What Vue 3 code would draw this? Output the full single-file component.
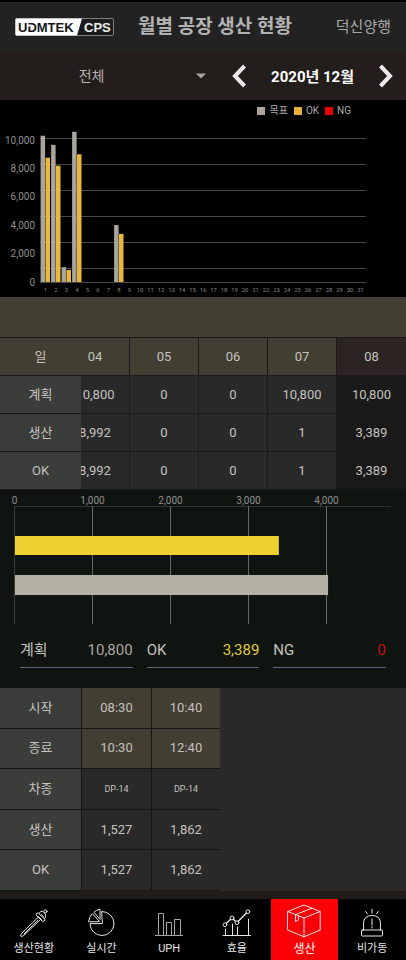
<script setup>
import { onMounted, ref } from 'vue'

const line = ref('all')

/* Monthly chart */
const days = Array.from({ length: 31 }, (_, i) => i + 1)
const monthly = [
  { day: 1, target: 10300, ok: 8750 },
  { day: 2, target: 9660, ok: 8190 },
  { day: 3, target: 1040, ok: 850 },
  { day: 4, target: 10580, ok: 8992 },
  { day: 8, target: 4014, ok: 3389 },
]
const ticks = [0, 2000, 4000, 6000, 8000, 10000]
const gridLines = [16, 42, 68, 94, 120, 146, 160]
const BASE = 160
const SCALE = 0.0142
const STEP = 10.5
const LEFT = 40
const slot = (day) => LEFT + (day - 1) * STEP
const fmt = (n) => n.toLocaleString('en-US')

/* Daily table */
const dates = ['04', '05', '06', '07', '08']
const selected = '08'
const daily = [
  { label: '계획', values: ['10,800', '0', '0', '10,800', '10,800'] },
  { label: '생산', values: ['8,992', '0', '0', '1', '3,389'] },
  { label: 'OK', values: ['8,992', '0', '0', '1', '3,389'] },
]
const scroller = ref(null)
onMounted(() => {
  scroller.value.scrollLeft = scroller.value.scrollWidth
})

/* Selected day chart */
const hTicks = [0, 1000, 2000, 3000, 4000]
const hx = (v) => 14.5 + v * 0.078

const stats = [
  { label: '계획', value: '10,800', tone: 'plan' },
  { label: 'OK', value: '3,389', tone: 'ok' },
  { label: 'NG', value: '0', tone: 'ng' },
]

const shifts = [
  { label: '시작', values: ['08:30', '10:40'], kind: 'time' },
  { label: '종료', values: ['10:30', '12:40'], kind: 'time' },
  { label: '차종', values: ['DP-14', 'DP-14'], kind: 'model' },
  { label: '생산', values: ['1,527', '1,862'], kind: 'count' },
  { label: 'OK', values: ['1,527', '1,862'], kind: 'count' },
]
</script>

<template>
  <div class="page">
    <header class="top">
      <svg class="logo" width="99" height="18" viewBox="0 0 99 18" role="img" aria-label="UDMTEK CPS">
        <rect x="0.5" y="0.5" width="98" height="17" rx="1.5" fill="#1c1c1c" stroke="#a8a8a8" stroke-width="0.7" />
        <path d="M1.5 0.5H67L62 17.5H1.5Q0.5 17.5 0.5 16.5V1.5Q0.5 0.5 1.5 0.5Z" fill="#fff" />
        <text x="3" y="14" class="logo-text dark">UDMTEK</text>
        <rect x="12" y="6.5" width="3.6" height="2" fill="#fff" />
        <text x="69" y="14" class="logo-text light">CPS</text>
      </svg>
      <h1>월별 공장 생산 현황</h1>
      <span class="company">덕신양행</span>
    </header>

    <section class="filter">
      <div class="picker">
        <select v-model="line" aria-label="라인">
          <option value="all">전체</option>
        </select>
        <svg class="caret" width="10" height="6" viewBox="0 0 10 6" aria-hidden="true"><path d="M0 0.5H10L5 5.5Z" fill="#a9a5a3" /></svg>
      </div>
      <div class="month">
        <button type="button" aria-label="이전 달">
          <svg width="14" height="24" viewBox="0 0 14 24"><path d="M12.5 2L3 12L12.5 22" /></svg>
        </button>
        <strong>2020년 12월</strong>
        <button type="button" aria-label="다음 달">
          <svg width="14" height="24" viewBox="0 0 14 24"><path d="M1.5 2L11 12L1.5 22" /></svg>
        </button>
      </div>
    </section>

    <section class="monthly">
      <ul class="legend">
        <li><i class="swatch target"></i>목표</li>
        <li><i class="swatch ok"></i>OK</li>
        <li><i class="swatch ng"></i>NG</li>
      </ul>
      <svg class="chart" viewBox="0 0 406 175">
        <line v-for="y in gridLines" :key="y" x1="40" :y1="y + 0.5" x2="366" :y2="y + 0.5" stroke="#484848" />
        <text v-for="t in ticks" :key="t" x="35" :y="BASE + 3.5 - t * SCALE" class="tick end">{{ fmt(t) }}</text>
        <g v-for="m in monthly" :key="m.day">
          <rect :x="slot(m.day) + 0.6" :y="BASE - m.target * SCALE" width="4.5" :height="m.target * SCALE" fill="#a9a59c" />
          <rect :x="slot(m.day) + 5.5" :y="BASE - m.ok * SCALE" width="4.5" :height="m.ok * SCALE" fill="#e8b83c" />
        </g>
        <text v-for="d in days" :key="d" :x="slot(d) + 5.5" y="170" class="day">{{ d }}</text>
      </svg>
    </section>

    <div class="band"></div>

    <div ref="scroller" class="scroller">
      <table class="daily">
        <thead>
          <tr>
            <th scope="col" class="stick">일</th>
            <th v-for="d in dates" :key="d" scope="col" :class="{ selected: d === selected }">{{ d }}</th>
          </tr>
        </thead>
        <tbody>
          <tr v-for="row in daily" :key="row.label">
            <th scope="row" class="stick label">{{ row.label }}</th>
            <td v-for="(v, i) in row.values" :key="i" :class="{ selected: dates[i] === selected }">{{ v }}</td>
          </tr>
        </tbody>
      </table>
    </div>

    <section class="detail">
      <svg class="chart" viewBox="0 0 406 138">
        <line x1="14" y1="16.5" x2="391" y2="16.5" stroke="#2f3330" />
        <g v-for="t in hTicks" :key="t">
          <line :x1="hx(t)" y1="16" :x2="hx(t)" y2="134" :stroke="t === 0 ? '#3a3e3b' : '#666a67'" />
          <text :x="hx(t)" y="14" class="tick mid">{{ fmt(t) }}</text>
        </g>
        <rect x="15" y="46" :width="hx(3389) - 15" height="19" fill="#efd232" />
        <rect x="15" y="85" :width="hx(4020) - 15" height="20" fill="#b5b0a4" />
      </svg>
      <dl class="stats">
        <div v-for="s in stats" :key="s.label" class="stat">
          <dt>{{ s.label }}</dt>
          <dd :class="s.tone">{{ s.value }}</dd>
        </div>
      </dl>
    </section>

    <div class="shift-area">
      <table class="shifts">
        <tbody>
          <tr v-for="row in shifts" :key="row.label">
            <th scope="row" class="label">{{ row.label }}</th>
            <td v-for="(v, i) in row.values" :key="i" :class="row.kind">{{ v }}</td>
          </tr>
        </tbody>
      </table>
    </div>

    <nav class="tabs">
      <a href="#status">
        <span class="icon">
          <svg width="30" height="30" viewBox="0 0 30 30">
            <path d="M19.5 9L2.8 25.2Q1.2 27 1.8 28.2Q3 29 4.8 27.4L21.5 11.5M5 26L19 12.2" />
            <path d="M17 6.5Q17.5 4.5 19.5 5.2L26 11.3Q26.2 13.4 24 13.4Z" />
            <path d="M20 5.4Q21 3 23.6 3.2L26.5 6.2Q26.8 9 25.6 10.8M19.5 8.6L22.8 12M22.5 6.5L24.5 8.6" />
            <circle cx="26.4" cy="3.4" r="1.6" />
          </svg>
        </span>
        생산현황
      </a>
      <a href="#realtime">
        <span class="icon">
          <svg width="30" height="30" viewBox="0 0 30 30">
            <path d="M16 3.5A12 12 0 1 1 4 15.6H16Z" />
            <path d="M2.6 13.4Q3 8.8 6.4 5.6L13.4 13.4Z" />
            <path d="M8.2 4Q10.6 1.7 14 1.3V11Z" />
          </svg>
        </span>
        실시간
      </a>
      <a href="#uph">
        <span class="icon">
          <svg class="dim" width="30" height="30" viewBox="0 0 30 30">
            <path d="M4.5 27V5.5H9.5V27M12.5 27V14.5H17.5V27M20.5 27V11.5H26.5V27M1.5 27.5H28.5" />
          </svg>
        </span>
        UPH
      </a>
      <a href="#efficiency">
        <span class="icon">
          <svg width="30" height="30" viewBox="0 0 30 30">
            <path d="M1 27.5H28.5M3.5 27V21M10.5 27V16M15.5 27V19M26.5 27V11" />
            <path d="M4.4 15.3L8.6 11.3M11.4 11.3L13.6 13.4M16.3 13.2L24.5 5" stroke-width="1.4" />
            <circle cx="3" cy="16.7" r="1.9" /><circle cx="10" cy="10" r="1.9" />
            <circle cx="15" cy="14.7" r="1.9" /><circle cx="25.8" cy="3.7" r="1.9" />
          </svg>
        </span>
        효율
      </a>
      <a href="#production" class="active" aria-current="page">
        <span class="icon">
          <svg width="34" height="34" viewBox="0 0 34 34">
            <path d="M0.8 7.5L17 1L33.2 7.5V26L17 32.8L0.8 26ZM0.8 7.5L17 14L33.2 7.5M17 14V32.8" />
            <path d="M8.5 10.6L25 4.2M8.5 10.6V17.6L11.4 16V11.8" />
          </svg>
        </span>
        생산
      </a>
      <a href="#idle">
        <span class="icon">
          <svg width="30" height="30" viewBox="0 0 30 30">
            <rect x="4.5" y="22" width="21" height="6" rx="0.8" />
            <path d="M6.5 22V16Q6.5 7.5 15 7.5Q23.5 7.5 23.5 16V22M15 11V17M15 18.6V20" />
            <path d="M15 1.2V5.2M8.6 3.4L10.6 6M21.4 3.4L19.4 6" />
          </svg>
        </span>
        비가동
      </a>
    </nav>
  </div>
</template>

<style>
body {
  background: #201c19;
}
</style>

<style scoped>
* {
  box-sizing: border-box;
}
.page {
  display: flex;
  flex-direction: column;
  min-height: 100vh;
  overflow: hidden;
  border-top: 2px solid #000;
  background: #201c19;
  color: #c4c2be;
  font-family: Roboto, "Noto Sans CJK KR", sans-serif;
}
.top {
  display: flex;
  align-items: center;
  height: 49px;
  padding: 0 15px;
  background: #222;
}
.logo {
  flex: none;
}
.logo-text {
  font: bold 13px "Liberation Sans", sans-serif;
}
.dark {
  fill: #161616;
}
.light {
  fill: #f0f0f0;
}
h1 {
  margin: 0 0 0 24px;
  font-size: 19px;
  line-height: 24px;
  font-weight: 700;
  color: #b2b2b2;
  white-space: nowrap;
}
.company {
  margin-left: auto;
  font-size: 15px;
  line-height: 20px;
  color: #a9a9a9;
  white-space: nowrap;
}
.filter {
  display: flex;
  height: 49px;
  background: #231d1b;
}
.picker {
  position: relative;
  flex: 0 0 52%;
  display: flex;
}
.picker select {
  flex: 1;
  appearance: none;
  border: 0;
  padding: 0 28px 0 0;
  background: transparent;
  color: #b4b0ae;
  font: inherit;
  font-size: 14px;
  text-align: center;
  text-align-last: center;
}
.caret {
  position: absolute;
  right: 5px;
  top: 22px;
  pointer-events: none;
}
.month {
  flex: 1;
  display: flex;
  align-items: center;
  justify-content: space-between;
  padding: 0 13px 0 21px;
}
.month strong {
  font-size: 15px;
  color: #fff;
}
.month button {
  display: flex;
  border: 0;
  padding: 0;
  background: none;
}
.month path {
  fill: none;
  stroke: #ecebea;
  stroke-width: 4;
}
.monthly {
  background: #000;
}
.legend {
  display: flex;
  justify-content: flex-end;
  gap: 6px;
  margin: 0;
  padding: 4px 55px 4px 0;
  list-style: none;
  font-size: 10px;
  line-height: 14px;
  color: #a8a8a8;
}
.legend li {
  display: flex;
  align-items: center;
  gap: 4px;
}
.swatch {
  width: 8px;
  height: 8px;
}
.swatch.target {
  background: #a9a39c;
}
.swatch.ok {
  background: #e8b23a;
}
.swatch.ng {
  background: #f00000;
}
.chart {
  display: block;
  width: 100%;
}
.tick {
  font-size: 10px;
  fill: #8f8f8f;
}
.end {
  text-anchor: end;
}
.mid {
  text-anchor: middle;
}
.day {
  font-size: 6px;
  fill: #858585;
  text-anchor: middle;
}
.band {
  height: 40px;
  background: #433e32;
}
.scroller {
  overflow-x: auto;
  scrollbar-width: none;
  background: #292929;
}
table {
  border-collapse: separate;
  border-spacing: 0;
  table-layout: fixed;
  font-size: 13px;
  line-height: 20px;
}
th,
td {
  width: 69px;
  padding: 0;
  text-align: center;
  font-weight: 400;
}
.daily {
  width: 426px;
}
.daily th,
.daily td {
  height: 38px;
  border-top: 1px solid #1b1919;
  border-right: 1px solid #1b1919;
}
.daily thead th {
  background: #433e32;
}
.daily td {
  background: #29292a;
}
.daily .stick {
  position: sticky;
  left: 0;
  width: 81px;
  border-right: 0;
}
.daily .label {
  background: #3b3d3b;
}
.daily thead .selected {
  background: #2b2423;
  border-right: 0;
}
.daily td.selected {
  background: #1a191a;
  border-right: 0;
}
.detail {
  border-top: 1px solid #161817;
  background: #101411;
  padding-bottom: 20px;
}
.stats {
  display: grid;
  grid-template-columns: repeat(3, 1fr);
  gap: 14px;
  margin: 0;
  padding: 9px 20px 0;
}
.stat {
  display: flex;
  justify-content: space-between;
  height: 31px;
  border-bottom: 1px solid #566b77;
  font-size: 15px;
  line-height: 26px;
}
.stat dd {
  margin: 0;
}
.stat .plan {
  color: #aaa69f;
}
.stat .ok {
  color: #e0c93f;
}
.stat .ng {
  color: #c01212;
}
.shift-area {
  background: #292929;
}
.shifts {
  width: 219px;
  height: 203px;
}
.shifts th,
.shifts td {
  height: 40px;
  border-bottom: 1px solid #171616;
}
.shifts td + td {
  border-left: 1px solid #171616;
}
.shifts .label {
  width: 82px;
  border-right: 1px solid #171616;
  background: #3b3d3b;
}
.shifts .time {
  background: #433e32;
}
.shifts .model {
  font-size: 9px;
}
.tabs {
  display: grid;
  grid-template-columns: repeat(6, 1fr);
  height: 61px;
  margin-top: auto;
  background: #000;
}
.tabs a {
  display: flex;
  flex-direction: column;
  align-items: center;
  gap: 4px;
  padding-top: 5px;
  color: #e4e4e4;
  font-size: 11px;
  line-height: 14px;
  text-decoration: none;
  white-space: nowrap;
}
.tabs .active {
  background: #fb0007;
  color: #fff;
  font-size: 12px;
}
.icon {
  display: flex;
  align-items: flex-end;
  height: 34px;
}
.icon svg {
  fill: none;
  stroke: #e6e6e6;
  stroke-width: 1;
  stroke-linejoin: round;
  stroke-linecap: round;
}
.icon .dim {
  stroke: #a6a6a6;
}
</style>
